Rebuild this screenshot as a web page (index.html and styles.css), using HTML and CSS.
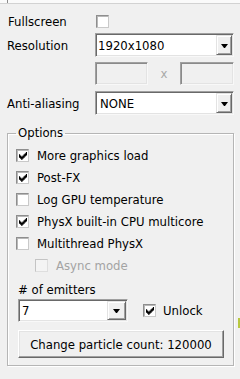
FILE: index.html
```html
<!DOCTYPE html>
<html>
<head>
<meta charset="utf-8">
<link rel="stylesheet" href="styles.css">
</head>
<body>
<div class="topbar"><span class="topmark"></span></div>
<div class="form">
  <div class="field row-full">
    <span class="label label-full">Fullscreen</span>
    <span class="check check-full"></span>
  </div>
  <div class="field row-res">
    <span class="label">Resolution</span>
    <div class="combo combo-wide"><span class="value">1920x1080</span><span class="drop"><i class="arrow"></i></span></div>
  </div>
  <div class="field row-size">
    <span class="label"></span>
    <div class="size">
      <span class="edit"></span>
      <span class="times">x</span>
      <span class="edit"></span>
    </div>
  </div>
  <div class="field row-aa">
    <span class="label">Anti-aliasing</span>
    <div class="combo combo-wide"><span class="value value-aa">NONE</span><span class="drop"><i class="arrow"></i></span></div>
  </div>
</div>
<fieldset class="group">
  <legend>Options</legend>
  <div class="opt opt-first"><span class="check"><svg class="tick" viewBox="0 0 7 7"><polygon points="6,0 7,0 7,3 6,3 6,4 5,4 5,5 4,5 4,6 3,6 3,7 2,7 2,6 1,6 1,5 0,5 0,2 1,2 1,3 2,3 2,4 3,4 3,3 4,3 4,2 5,2 5,1 6,1"/></svg></span><span class="opt-text">More graphics load</span></div>
  <div class="opt"><span class="check"><svg class="tick" viewBox="0 0 7 7"><polygon points="6,0 7,0 7,3 6,3 6,4 5,4 5,5 4,5 4,6 3,6 3,7 2,7 2,6 1,6 1,5 0,5 0,2 1,2 1,3 2,3 2,4 3,4 3,3 4,3 4,2 5,2 5,1 6,1"/></svg></span><span class="opt-text">Post-FX</span></div>
  <div class="opt"><span class="check"></span><span class="opt-text">Log GPU temperature</span></div>
  <div class="opt"><span class="check"><svg class="tick" viewBox="0 0 7 7"><polygon points="6,0 7,0 7,3 6,3 6,4 5,4 5,5 4,5 4,6 3,6 3,7 2,7 2,6 1,6 1,5 0,5 0,2 1,2 1,3 2,3 2,4 3,4 3,3 4,3 4,2 5,2 5,1 6,1"/></svg></span><span class="opt-text">PhysX built-in CPU multicore</span></div>
  <div class="opt"><span class="check"></span><span class="opt-text">Multithread PhysX</span></div>
  <div class="opt opt-sub"><span class="check check-disabled"></span><span class="opt-text text-disabled">Async mode</span></div>
  <div class="emit-label">#&nbsp;of emitters</div>
  <div class="emit-row">
    <div class="combo combo-emit"><span class="value value-emit">7</span><span class="drop drop-emit"><i class="arrow"></i></span></div>
    <span class="check check-unlock"><svg class="tick" viewBox="0 0 7 7"><polygon points="6,0 7,0 7,3 6,3 6,4 5,4 5,5 4,5 4,6 3,6 3,7 2,7 2,6 1,6 1,5 0,5 0,2 1,2 1,3 2,3 2,4 3,4 3,3 4,3 4,2 5,2 5,1 6,1"/></svg></span>
    <span class="unlock-text">Unlock</span>
  </div>
  <div class="button">Change particle count: 120000</div>
</fieldset>
<div class="edge-mark"></div>
</body>
</html>
```
FILE: styles.css
```css
* { box-sizing: border-box; }
html, body { margin: 0; padding: 0; }
body {
  width: 240px;
  height: 379px;
  background: #f0f0f0;
  font-family: "DejaVu Sans Condensed", "DejaVu Sans", sans-serif;
  font-size: 13px;
  color: #000;
  position: relative;
  overflow: hidden;
}
.topbar {
  height: 4px;
  background: #fafafa;
  border-bottom: 1px solid #d2d2d2;
  display: flex;
}
.topmark {
  width: 1px;
  height: 3px;
  margin-left: 7px;
  background: #8a8a8a;
}
.form {
  display: flex;
  flex-direction: column;
  padding-left: 7px;
}
.field {
  display: flex;
  align-items: center;
}
.label {
  width: 88px;
  flex: none;
  line-height: 13px;
  white-space: nowrap;
}
.label-full { padding-left: 1px; }
.row-full { margin-top: 11px; height: 13px; }
.row-res { margin-top: 5px; height: 24px; }
.row-size { margin-top: 5px; height: 23px; }
.row-aa { margin-top: 6px; height: 24px; }

.check {
  width: 13px;
  height: 13px;
  flex: none;
  background: #fff;
  border: 1px solid;
  border-color: #8e8e8e #c9c9c9 #c9c9c9 #8e8e8e;
  box-shadow: inset 1px 1px 0 #b8b8b8;
  position: relative;
}
.check-full { margin-left: 1px; }
.check-disabled {
  background: #f4f4f4;
  border-color: #c4c4c4 #dedede #dedede #c4c4c4;
  box-shadow: none;
}
.tick {
  position: absolute;
  left: 2px;
  top: 2px;
  width: 8px;
  height: 8px;
  fill: #000;
}

.combo {
  display: flex;
  align-items: stretch;
  background: #fff;
  border: 1px solid;
  border-color: #a0a0a0 #f8f8f8 #f8f8f8 #a0a0a0;
  box-shadow: inset 1px 1px 0 #696969, inset -1px -1px 0 #e3e3e3;
  padding: 1px;
}
.combo-wide { width: 139px; height: 24px; }
.value {
  flex: 1;
  padding-left: 1px;
  display: flex;
  align-items: center;
  white-space: nowrap;
}
.value-aa { padding-left: 3px; }
.drop {
  width: 16px;
  flex: none;
  background: #f0f0f0;
  border: 1px solid;
  border-color: #e3e3e3 #696969 #696969 #e3e3e3;
  box-shadow: inset 1px 1px 0 #fff, inset -1px -1px 0 #a0a0a0;
  display: flex;
  align-items: center;
  justify-content: center;
}
.arrow {
  width: 1px;
  height: 0;
  border-top: 4px solid #000;
  border-left: 3px solid transparent;
  border-right: 3px solid transparent;
  box-sizing: content-box;
  margin-top: 1px;
}

.size {
  width: 139px;
  height: 23px;
  display: grid;
  grid-template-columns: 53px 1fr 54px;
  align-items: center;
}
.edit {
  height: 23px;
  background: #f0f0f0;
  border: 1px solid;
  border-color: #a0a0a0 #f8f8f8 #f8f8f8 #a0a0a0;
  box-shadow: inset 1px 1px 0 #8a8a8a, inset -1px -1px 0 #e3e3e3;
}
.times {
  text-align: center;
  color: #a8a8a8;
  line-height: 13px;
}

.group {
  margin: 10px 0 0 7px;
  width: 227px;
  padding: 0 8px 7px 8px;
  border: 1px solid #b5b5b5;
  box-shadow: inset 1px 1px 0 #fff, 1px 1px 0 #fff;
  min-width: 0;
}
.group legend {
  padding: 0 2px;
  line-height: 16px;
  height: 16px;
}
.opt {
  display: flex;
  align-items: center;
  height: 13px;
  margin-top: 9px;
}
.opt-first { margin-top: 8px; }
.opt-sub { padding-left: 19px; }
.opt-text {
  margin-left: 8px;
  line-height: 13px;
  white-space: nowrap;
}
.text-disabled { color: #a3a3a3; }

.emit-label {
  margin: 11px 0 0 2px;
  line-height: 13px;
  height: 13px;
}
.emit-row {
  margin: 3px 0 0 2px;
  display: flex;
  align-items: center;
  height: 23px;
}
.combo-emit { width: 110px; height: 23px; }
.value-emit { padding-left: 2px; }
.drop-emit { width: 19px; }
.check-unlock { margin-left: 15px; }
.unlock-text {
  margin-left: 7px;
  line-height: 13px;
}

.button {
  margin: 8px 0 0 2px;
  width: 206px;
  height: 28px;
  background: #f0f0f0;
  border: 1px solid;
  border-color: #fff #696969 #696969 #fff;
  box-shadow: inset -1px -1px 0 #a0a0a0, inset 1px 1px 0 #e3e3e3;
  display: flex;
  align-items: center;
  justify-content: center;
  white-space: nowrap;
}

.edge-mark {
  position: absolute;
  right: 0;
  top: 318px;
  width: 2px;
  height: 10px;
  background: #b8c840;
}
```
